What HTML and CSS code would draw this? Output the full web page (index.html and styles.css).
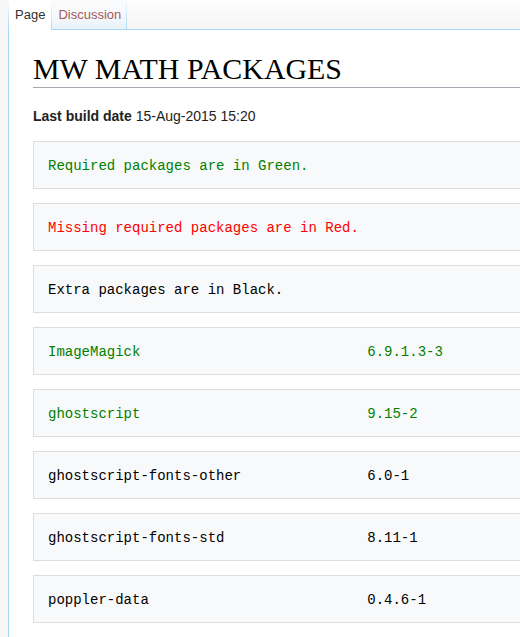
FILE: index.html
```html
<!DOCTYPE html>
<html>
<head>
<meta charset="utf-8">
<link rel="stylesheet" href="styles.css">
</head>
<body>
<div class="page">
  <div class="rail"></div>
  <div class="main">
    <div class="tabbar">
      <div class="tab active">Page</div>
      <div class="tab new">Discussion</div>
      <div class="tab-fill"></div>
    </div>
    <div class="content">
      <h1 class="title">MW MATH PACKAGES</h1>
      <p class="build"><b>Last build date</b> 15-Aug-2015 15:20</p>
      <pre class="box green">Required packages are in Green.</pre>
      <pre class="box red">Missing required packages are in Red.</pre>
      <pre class="box">Extra packages are in Black.</pre>
      <pre class="box green"><span class="name">ImageMagick</span><span>6.9.1.3-3</span></pre>
      <pre class="box green"><span class="name">ghostscript</span><span>9.15-2</span></pre>
      <pre class="box"><span class="name">ghostscript-fonts-other</span><span>6.0-1</span></pre>
      <pre class="box"><span class="name">ghostscript-fonts-std</span><span>8.11-1</span></pre>
      <pre class="box"><span class="name">poppler-data</span><span>0.4.6-1</span></pre>
    </div>
  </div>
</div>
</body>
</html>
```
FILE: styles.css
```css
html, body {
  margin: 0;
  padding: 0;
  background: #f6f6f6;
  overflow: hidden;
  height: 637px;
}
.page {
  display: flex;
  width: 760px;
  height: 637px;
}
.rail {
  width: 8px;
  flex: none;
  background: #f6f6f6;
}
.main {
  flex: 1;
  display: flex;
  flex-direction: column;
}
.tabbar {
  display: flex;
  height: 30px;
  flex: none;
  font-family: "Liberation Sans", Arial, sans-serif;
  font-size: 13px;
}
.tab {
  padding: 0 6px 0 7px;
  line-height: 29px;
  border-right: 1px solid #a7d7f9;
  border-image: linear-gradient(to bottom, rgba(167,215,249,0) 0%, #a7d7f9 100%) 1;
  border-left: 0;
  border-top: 0;
  border-bottom: 0;
}
.tab.active {
  background: #fff;
  color: #333;
  height: 30px;
  border-left: 1px solid #a7d7f9;
  border-image: linear-gradient(to bottom, rgba(167,215,249,0) 0%, #a7d7f9 100%) 1;
  padding-left: 6px;
}
.tab.new {
  color: #a55858;
  background: linear-gradient(to bottom, #fbfbfb 0%, #f6f9fc 50%, #e8f2f8 100%);
  border-bottom: 1px solid #a7d7f9;
  height: 29px;
  padding: 0 5px 0 6px;
}
.tab-fill {
  flex: 1;
  background: linear-gradient(to bottom, #fdfdfd 0%, #f6f6f6 100%);
  border-bottom: 1px solid #a7d7f9;
  height: 29px;
}
.content {
  flex: 1;
  background: #fff;
  border-left: 1px solid #a7d7f9;
  padding: 20px 0 0 24px;
  color: #222;
}
.title {
  margin: 0;
  padding: 0;
  font-family: "Liberation Serif", "Times New Roman", serif;
  font-weight: normal;
  font-size: 29.9px;
  line-height: 37px;
  color: #000;
  border-bottom: 1px solid #a2a9b1;
}
.build {
  margin: 17px 0 14px;
  font-family: "Liberation Sans", Arial, sans-serif;
  font-size: 14px;
  line-height: 22px;
  color: #222;
}
.build b {
  font-weight: bold;
}
.box {
  margin: 0 0 14px;
  padding: 15px 14px 13px;
  border: 1px solid #ddd;
  background: #f8f9fa;
  font-family: "Liberation Mono", "Courier New", monospace;
  font-size: 14px;
  line-height: 18px;
  color: #000;
  display: flex;
}
.box .name {
  width: 38ch;
  flex: none;
}
.box.green {
  color: #008000;
}
.box.red {
  color: #ff0000;
}
```
